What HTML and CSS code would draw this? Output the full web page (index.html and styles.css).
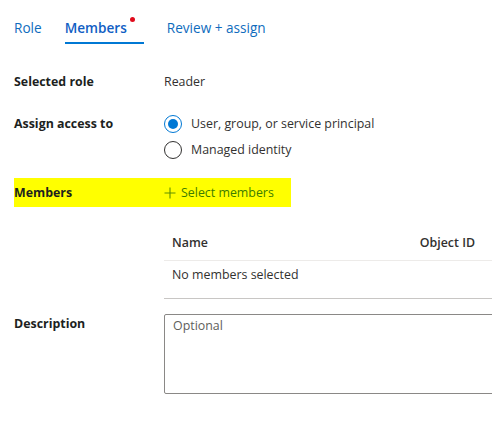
FILE: index.html
```html
<!DOCTYPE html>
<html>
<head>
<meta charset="utf-8">
<link rel="stylesheet" href="styles.css">
</head>
<body>
<div class="page">
  <nav class="tabs">
    <span class="tab">Role</span>
    <span class="tab active">Members<span class="dot"></span></span>
    <span class="tab">Review + assign</span>
  </nav>

  <div class="row row-role">
    <div class="label">Selected role</div>
    <div class="value">Reader</div>
  </div>

  <div class="row row-access">
    <div class="label">Assign access to</div>
    <div class="radios">
      <div class="radio checked"><span class="circle"></span><span>User, group, or service principal</span></div>
      <div class="radio"><span class="circle"></span><span>Managed identity</span></div>
    </div>
  </div>

  <div class="row row-members">
    <div class="label">Members</div>
    <div class="add"><svg class="plus" width="12" height="12" viewBox="0 0 12 12"><path d="M6 0.5V11.5M0.5 6H11.5" stroke="#5f9100" stroke-width="1.1" fill="none"/></svg>Select members</div>
  </div>

  <div class="table">
    <div class="thead">
      <span class="col-name">Name</span>
      <span class="col-id">Object ID</span>
    </div>
    <div class="tbody">No members selected</div>
  </div>

  <div class="row row-desc">
    <div class="label">Description</div>
    <div class="textarea">Optional</div>
  </div>
</div>
</body>
</html>
```
FILE: styles.css
```css
html, body { margin: 0; padding: 0; background: #fff; }
body {
  font-family: "Open Sans", "Noto Sans", sans-serif;
  font-size: 12.4px;
  color: #323130;
  overflow: hidden;
}
.page { width: 492px; height: 445px; overflow: hidden; }
.tabs {
  display: flex;
  padding: 18px 0 0 14px;
  height: 27px;
}
.tab {
  position: relative;
  color: #0f6cbd;
  font-size: 13.6px;
  line-height: 20px;
  margin-right: 23px;
}
.tab.active {
  font-weight: 600;
  color: #115ec4;
  padding-right: 17px;
}
.tab.active::after {
  content: "";
  position: absolute;
  left: 0; right: 0;
  top: 24px;
  height: 2px;
  background: #0078d4;
}
.dot {
  position: absolute;
  right: 9px; top: -1px;
  width: 5px; height: 5px;
  border-radius: 50%;
  background: #e00b1c;
}
.row { display: flex; padding-left: 14px; }
.label { width: 150px; font-weight: 700; color: #201f1e; flex: none; }
.row-role { margin-top: 28px; line-height: 18px; }
.row-access { margin-top: 24px; line-height: 18px; }
.radios { display: flex; flex-direction: column; gap: 8px; }
.radio { display: flex; align-items: center; gap: 9px; }
.circle {
  width: 18px; height: 18px;
  border: 1px solid #323130;
  border-radius: 50%;
  box-sizing: border-box;
  position: relative;
  flex: none;
}
.radio.checked .circle { border-color: #0078d4; }
.radio.checked .circle::after {
  content: "";
  position: absolute;
  left: 3px; top: 3px;
  width: 10px; height: 10px;
  border-radius: 50%;
  background: #0078d4;
}
.row-members {
  margin: 19px 0 0 14px;
  padding: 0;
  width: 277px;
  height: 29px;
  align-items: center;
  background: #ffff00;
}
.add { color: #3d7d00; display: flex; align-items: center; }
.plus { margin-right: 5px; flex: none; }
.table { margin: 18px 0 0 164px; }
.thead {
  display: flex;
  justify-content: space-between;
  height: 35px;
  align-items: center;
  padding: 0 17px 0 8px;
  border-bottom: 1px solid #edebe9;
  font-weight: 600;
  color: #323130;
}
.tbody {
  height: 37px;
  line-height: 28px;
  padding-left: 8px;
  border-bottom: 1px solid #c8c6c4;
}
.row-desc { margin-top: 15px; }
.row-desc .label { padding-top: 1px; }
.textarea {
  width: 340px;
  height: 80px;
  box-sizing: border-box;
  border: 1px solid #8a8886;
  border-radius: 2px;
  padding: 2px 8px;
  color: #605e5c;
  flex: none;
}
```
